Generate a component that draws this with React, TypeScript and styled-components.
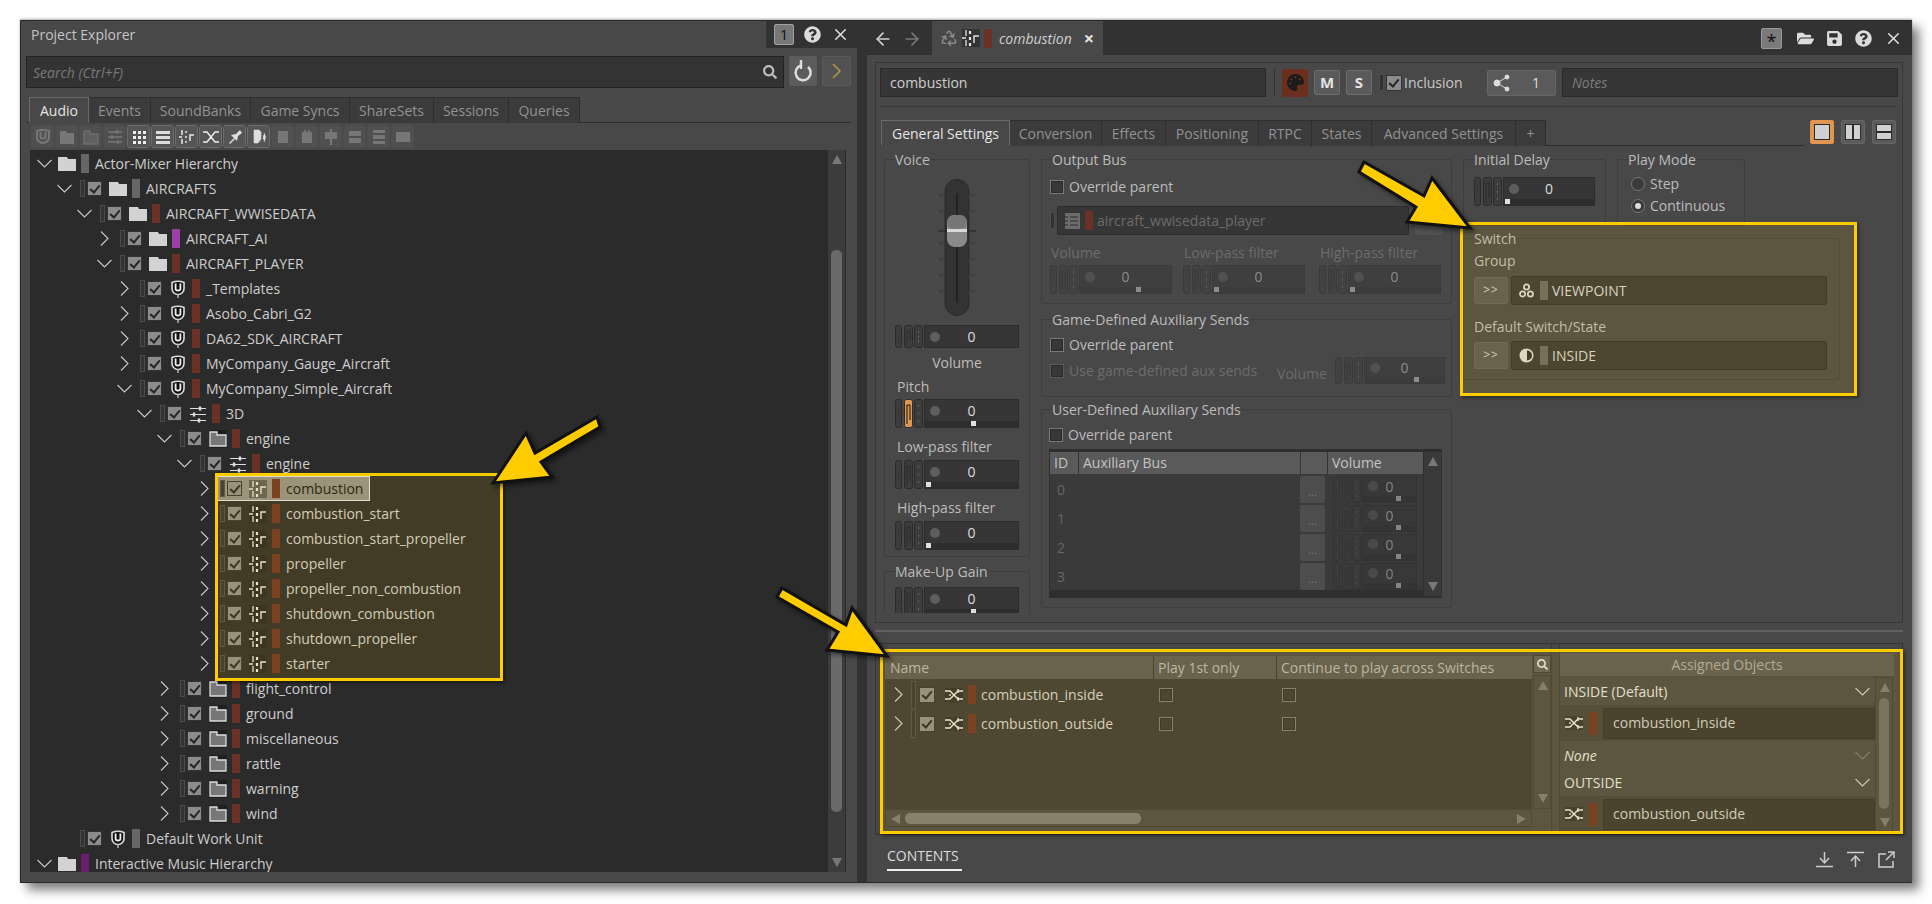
import { ReactElement, ReactNode } from 'react';
import styled, { createGlobalStyle } from 'styled-components';
import { FaFolderOpen, FaPalette, FaQuestionCircle, FaSave, FaSearch } from 'react-icons/fa';
import { ArrowLeft, ArrowRight, Recycle, X } from 'lucide-react';

const GlobalStyle = createGlobalStyle`
	html, body {
		margin: 0;
		background: #fff;
		overflow: hidden;
	}
	body {
		font-family: "Open Sans", "Noto Sans", sans-serif;
		font-size: 14px;
		color: #c8c8c8;
	}
	* {
		box-sizing: border-box;
	}
`;

/* ---- small drawings ---- */

const Svg = styled.svg`
	display: block;
	flex: none;
`;

const Chevron = ({ open, dim }: { open: boolean; dim?: boolean }): ReactElement => (
	<Svg width="15" height="15" viewBox="0 0 15 15" fill="none" stroke={dim ? '#777' : '#c8c8c8'} strokeWidth="1.1">
		{open ? <path d="M0.5 4 7.5 11 14.5 4" /> : <path d="M4 0.5 11 7.5 4 14.5" />}
	</Svg>
);

const FolderIcon = (): ReactElement => (
	<Svg width="18" height="14" viewBox="0 0 18 14" fill="#d2d2d2">
		<path d="M0 0H9L10 2H18V14H0Z" />
	</Svg>
);

const ActorFolderIcon = (): ReactElement => (
	<Svg width="18" height="18" viewBox="0 0 18 18">
		<rect width="18" height="18" fill="#1f1f1f" />
		<path d="M1 2H8V5H17V16H1Z" fill="#777" stroke="#ddd" strokeWidth="1.3" />
	</Svg>
);

const WorkUnitIcon = (): ReactElement => (
	<Svg width="14" height="18" viewBox="0 0 14 18" fill="none">
		<path d="M1 2.5Q7 0 13 2.5V8.5A6 6 0 0 1 1 8.5Z" fill="#111" stroke="#ddd" strokeWidth="1.6" />
		<path d="M4.6 3.5V9C4.6 11 9.4 11 9.4 9V3.5" stroke="#eee" strokeWidth="1.8" />
		<path d="M7 14V18" stroke="#bbb" strokeWidth="1.4" />
	</Svg>
);

const BlendIcon = (): ReactElement => (
	<Svg width="18" height="18" viewBox="0 0 18 18" stroke="#ddd" strokeWidth="1.2">
		<path d="M1 3.5H17M1 9.5H17M1 15.5H17" />
		<path d="M11 1.5V5.5M5 7.5V11.5M10 13.5V17.5" strokeWidth="2.4" />
	</Svg>
);

const SwitchIcon = (): ReactElement => (
	<Svg width="18" height="18" viewBox="0 0 18 18" fill="none">
		<rect width="18" height="18" fill="#1d1d1d" opacity="0.45" />
		<path d="M0 9H4M4 1V7M4 11V17" stroke="#e4e4e4" strokeWidth="1.3" />
		<path d="M8 2V5M8 8V11M8 14V17" stroke="#e4e4e4" strokeWidth="2.2" />
		<path d="M12 14V7H17" stroke="#e4e4e4" strokeWidth="1.4" />
	</Svg>
);

const RandomIcon = (): ReactElement => (
	<Svg width="18" height="14" viewBox="0 0 18 14" fill="none" stroke="#e8e8e8" strokeWidth="1.3">
		<rect width="18" height="14" fill="#1d1d1d" opacity="0.4" stroke="none" />
		<path d="M0 3H5L13 11H18M0 11H5L13 3H18" />
		<path d="M5 6V8M13 1V5M13 9V13" />
	</Svg>
);

const BusIcon = (): ReactElement => (
	<Svg width="18" height="18" viewBox="0 0 18 18">
		<rect x="2" y="1" width="15" height="16" fill="#6c6c6c" />
		<path d="M0 5H5M0 9H5M0 13H5M7 5H15M7 9H15M7 13H15" stroke="#2c2c2c" strokeWidth="1.2" />
	</Svg>
);

const GroupIcon = (): ReactElement => (
	<Svg width="15" height="15" viewBox="0 0 15 15" fill="none" stroke="#d4d4d4" strokeWidth="1.8">
		<circle cx="7.5" cy="4" r="2.6" />
		<circle cx="3.6" cy="11" r="2.6" />
		<circle cx="11.4" cy="11" r="2.6" />
	</Svg>
);

const StateIcon = (): ReactElement => (
	<Svg width="15" height="15" viewBox="0 0 15 15">
		<circle cx="7.5" cy="7.5" r="7" fill="#d8d8d8" />
		<path d="M8 2.5A5 5 0 0 1 8 12.5Z" fill="#2c2c2c" />
	</Svg>
);

const CheckMark = styled.span<{ $big?: boolean }>`
	display: block;
	flex: none;
	width: ${(p) => (p.$big ? 14 : 13)}px;
	height: ${(p) => (p.$big ? 14 : 13)}px;
	background: #8c8c8c;
	box-shadow: 0 0 0 1px #333;
	position: relative;
	&::after {
		content: '';
		position: absolute;
		left: 4px;
		top: 1px;
		width: 4px;
		height: 8px;
		border: solid #262626;
		border-width: 0 2px 2px 0;
		transform: rotate(40deg);
	}
`;

const EmptyCheck = styled.span<{ $disabled?: boolean }>`
	display: block;
	flex: none;
	width: 14px;
	height: 14px;
	background: #383838;
	border: 1px solid ${(p) => (p.$disabled ? '#5c5c5c' : '#7a7a7a')};
	box-shadow: inset 0 0 0 1px #2a2a2a;
`;

const DragHandle = styled.span`
	display: block;
	flex: none;
	width: 5px;
	height: 17px;
	background: #333;
	border: 1px solid #4c4c4c;
`;

const ColorBar = styled.span<{ $color: string; $height?: number }>`
	display: block;
	flex: none;
	width: 8px;
	height: ${(p) => p.$height ?? 19}px;
	background: ${(p) => p.$color};
`;

/* ---- callouts over the screenshot ---- */

const Page = styled.div`
	position: relative;
	width: 1932px;
	height: 904px;
	padding: 20px 20px 21px;
`;

const Callout = styled.div`
	position: absolute;
	border: 3px solid #ffcc00;
	background: rgba(255, 204, 0, 0.11);
	box-shadow: 2px 2px 3px rgba(0, 0, 0, 0.4);
	pointer-events: none;
`;

const TreeCallout = styled(Callout)`
	left: 215px;
	top: 473px;
	width: 288px;
	height: 208px;
`;

const SwitchCallout = styled(Callout)`
	left: 1460px;
	top: 222px;
	width: 397px;
	height: 174px;
`;

const ContentsCallout = styled(Callout)`
	left: 880px;
	top: 649px;
	width: 1023px;
	height: 185px;
`;

const Arrows = styled.svg`
	position: absolute;
	left: 0;
	top: 0;
	filter: drop-shadow(3px 3px 2px rgba(0, 0, 0, 0.45));
	pointer-events: none;
`;

/* ---- window ---- */

const Window = styled.div`
	display: flex;
	width: 1892px;
	height: 863px;
	box-shadow: 0 -1px 2px rgba(0, 0, 0, 0.3), 7px 7px 10px rgba(0, 0, 0, 0.5);
	border: 1px solid #2a2a2a;
	border-width: 1px 0 1px 1px;
`;

const ExplorerPanel = styled.section`
	width: 836px;
	background: #484848;
	display: flex;
	flex-direction: column;
`;

const ExplorerTitleBar = styled.header`
	height: 27px;
	display: flex;
	align-items: center;
	justify-content: space-between;
	padding-left: 10px;
	color: #c4c4c4;
`;

const TitleTools = styled.div`
	width: 91px;
	height: 27px;
	background: #323232;
	display: flex;
	align-items: center;
	gap: 10px;
	padding-left: 8px;
	color: #dcdcdc;
`;

const CountBadge = styled.span`
	width: 20px;
	height: 21px;
	border-radius: 2px;
	background: #777;
	border: 1px solid #a0a0a0;
	color: #111;
	font-size: 15px;
	line-height: 18px;
	text-align: center;
`;

const SearchRow = styled.div`
	display: flex;
	margin: 8px 0 0 5px;
	gap: 5px;
`;

const SearchField = styled.div`
	width: 758px;
	height: 32px;
	background: #333;
	border: 1px solid #222;
	display: flex;
	align-items: center;
	justify-content: space-between;
	padding: 0 6px;
	font-style: italic;
	color: #7a7a7a;
`;

const SquareButton = styled.button<{ $width: number; $active?: boolean }>`
	width: ${(p) => p.$width}px;
	height: 30px;
	padding: 0;
	background: ${(p) => (p.$active ? '#5c5c5c' : '#525252')};
	border: 1px solid #595959;
	border-radius: 2px;
	display: flex;
	align-items: center;
	justify-content: center;
	font: inherit;
	color: #c0a24c;
`;

const TabStrip = styled.nav<{ $left: number }>`
	display: flex;
	height: 26px;
	padding-left: ${(p) => p.$left}px;
	border-bottom: 1px solid #2d2d2d;
`;

const ExplorerTabs = styled(TabStrip)`
	margin: 9px 6px 0 5px;
`;

const Tab = styled.div<{ $width: number; $active?: boolean }>`
	width: ${(p) => p.$width}px;
	height: 26px;
	flex: none;
	text-align: center;
	line-height: 25px;
	background: ${(p) => (p.$active ? '#484848' : '#3b3b3b')};
	color: ${(p) => (p.$active ? '#e4e4e4' : '#929292')};
	border-right: 1px solid #2e2e2e;
	border-top: 1px solid #2e2e2e;
	${(p) => p.$active && 'border: 1px solid #6a6a6a; border-bottom: 1px solid #484848;'}
`;

const ToolRow = styled.div`
	display: flex;
	gap: 1px;
	margin: 2px 0 0 10px;
`;

const ToolButton = styled.span<{ $on: boolean }>`
	width: 23px;
	height: 23px;
	border-radius: 3px;
	background: ${(p) => (p.$on ? '#555' : '#505050')};
	border: 1px solid ${(p) => (p.$on ? '#6c6c6c' : '#4e4e4e')};
	display: flex;
	align-items: center;
	justify-content: center;
	& > svg {
		opacity: ${(p) => (p.$on ? 1 : 0.28)};
	}
`;

const TreeArea = styled.div`
	position: relative;
	margin: 2px 0 0 9px;
	width: 816px;
	height: 722px;
	background: #2b2b2b;
	padding-top: 1px;
	overflow: hidden;
`;

const TreeRow = styled.div<{ $depth: number }>`
	height: 25px;
	display: flex;
	align-items: center;
	padding-left: ${(p) => 6.5 + 20 * p.$depth}px;
	color: #cdcdcd;
	white-space: nowrap;
`;

const ChevronSlot = styled.span`
	width: 15px;
	flex: none;
`;

const RowBody = styled.div<{ $selected?: boolean; $root?: boolean }>`
	display: flex;
	align-items: center;
	height: 25px;
	margin-left: ${(p) => (p.$root ? -5 : 4)}px;
	padding: 0 6px 0 3px;
	border: 1px solid ${(p) => (p.$selected ? '#e0e0e0' : 'transparent')};
	background: ${(p) => (p.$selected ? '#908e8a' : 'transparent')};
	color: ${(p) => (p.$selected ? '#111' : 'inherit')};
`;

const RowCheck = styled(CheckMark)`
	margin-left: 3px;
`;

const RowIcon = styled.span<{ $root?: boolean }>`
	width: 18px;
	flex: none;
	margin: 0 5px 0 ${(p) => (p.$root ? 7.5 : 8.5)}px;
	display: flex;
	justify-content: center;
`;

const RowLabel = styled.span`
	margin-left: 6px;
`;

const ScrollTrack = styled.div`
	position: absolute;
	right: 1px;
	top: 0;
	bottom: 0;
	width: 17px;
	background: #3c3c3c;
`;

const ScrollThumb = styled.div<{ $top: number; $height: number }>`
	position: absolute;
	left: 3px;
	right: 3px;
	top: ${(p) => p.$top}px;
	height: ${(p) => p.$height}px;
	border-radius: 5px;
	background: #6a6a6a;
`;

const ScrollArrow = styled.span<{ $dir: 'up' | 'down' | 'left' | 'right' }>`
	position: absolute;
	width: 0;
	height: 0;
	border: 5px solid transparent;
	${(p) =>
		p.$dir === 'up'
			? 'border-bottom: 9px solid #787878; border-top: 0; top: 5px; left: 4px;'
			: p.$dir === 'down'
				? 'border-top: 9px solid #787878; border-bottom: 0; bottom: 5px; left: 4px;'
				: p.$dir === 'left'
					? 'border-right: 9px solid #787878; border-left: 0; left: 5px; top: 4px;'
					: 'border-left: 9px solid #787878; border-right: 0; right: 5px; top: 4px;'}
`;

/* ---- property editor ---- */

const EditorPanel = styled.section`
	flex: 1;
	background: #323232;
	display: flex;
	flex-direction: column;
	min-width: 0;
`;

const EditorHeader = styled.header`
	height: 34px;
	display: flex;
	align-items: flex-end;
	padding-left: 16px;
	flex: none;
`;

const NavArrows = styled.div`
	display: flex;
	gap: 9px;
	width: 59px;
	height: 33px;
	align-items: center;
	color: #d0d0d0;
	& > svg:last-child {
		color: #777;
	}
`;

const DocTab = styled.div`
	width: 171px;
	height: 34px;
	background: #484848;
	display: flex;
	align-items: center;
	padding-left: 8px;
	font-style: italic;
	gap: 4px;
	color: #cfcfcf;
`;

const DocTitle = styled.span`
	margin-left: 3px;
`;

const TabClose = styled.span`
	margin-left: 8px;
	font-style: normal;
	font-weight: 700;
	font-size: 18px;
	line-height: 18px;
	color: #e4e4e4;
`;

const HeaderTools = styled.div`
	margin-left: auto;
	height: 34px;
	display: flex;
	align-items: center;
	gap: 12px;
	padding-right: 9px;
	color: #dcdcdc;
`;

const StarButton = styled.span`
	width: 21px;
	height: 21px;
	margin-right: 3px;
	background: #7a7a7a;
	border: 1px solid #999;
	border-radius: 2px;
	color: #111;
	font-size: 18px;
	line-height: 24px;
	text-align: center;
`;

const EditorBody = styled.div`
	flex: 1;
	margin-left: 10px;
	background: #484848;
	padding: 7px 9px 0 8px;
	display: flex;
	flex-direction: column;
	min-height: 0;
`;

const SettingsFrame = styled.div`
	height: 561px;
	flex: none;
	border: 1px solid #383838;
	overflow: hidden;
	padding: 5px 4px 0;
`;

const NameRow = styled.div`
	display: flex;
	align-items: center;
	height: 29px;
`;

const TextField = styled.div<{ $width: number; $muted?: boolean }>`
	width: ${(p) => p.$width}px;
	height: 29px;
	flex: none;
	background: #363636;
	border: 1px solid #2a2a2a;
	display: flex;
	align-items: center;
	padding-left: 9px;
	color: ${(p) => (p.$muted ? '#7c7c7c' : '#cfcfcf')};
	font-style: ${(p) => (p.$muted ? 'italic' : 'normal')};
`;

const ThinRule = styled.span`
	width: 1px;
	height: 27px;
	background: #333;
	margin: 0 7px 0 8px;
	flex: none;
`;

const ColorSwatch = styled.span`
	width: 26px;
	height: 28px;
	background: #6c2f1e;
	color: #1c1c1c;
	display: flex;
	align-items: center;
	justify-content: center;
	flex: none;
	border-radius: 2px;
`;

const LetterButton = styled.span`
	width: 26px;
	height: 25px;
	flex: none;
	margin-left: 6px;
	background: #5a5a5a;
	border: 1px solid #6c6c6c;
	border-radius: 2px;
	color: #e4e4e4;
	font-weight: 700;
	font-size: 15px;
	line-height: 22px;
	text-align: center;
`;

const InclusionBlock = styled.div`
	display: flex;
	align-items: center;
	margin-left: 7px;
	width: 108px;
	gap: 3px;
	flex: none;
`;

const ShareButton = styled.span`
	width: 69px;
	height: 26px;
	flex: none;
	background: #5a5a5a;
	border: 1px solid #666;
	border-radius: 2px;
	display: flex;
	align-items: center;
	justify-content: space-between;
	padding: 0 15px 0 5px;
	color: #ddd;
`;

const NotesField = styled(TextField)`
	margin-left: 6px;
`;

const HRule = styled.hr`
	border: 0;
	height: 1px;
	background: #3a3a3a;
	margin: 9px 2px 0 0;
`;

const SettingsTabRow = styled.div`
	display: flex;
	align-items: flex-end;
	margin-top: 13px;
`;

const SettingsTabs = styled(TabStrip)`
	width: 924px;
`;

const ViewButtons = styled.div`
	display: flex;
	gap: 7px;
	margin: 0 0 2px 6px;
`;

const ViewButton = styled.span<{ $on?: boolean; $kind: 'one' | 'cols' | 'rows' }>`
	width: 24px;
	height: 24px;
	padding: 4px;
	border-radius: 2px;
	background: ${(p) => (p.$on ? '#e0964f' : '#5a5a5a')};
	border: 1px solid ${(p) => (p.$on ? '#e0964f' : '#666')};
	display: grid;
	gap: 2px;
	grid-template-columns: ${(p) => (p.$kind === 'cols' ? '1fr 1fr' : '1fr')};
	grid-template-rows: ${(p) => (p.$kind === 'rows' ? '1fr 1fr' : '1fr')};
	& > i {
		display: block;
		background: #d0d0d0;
		box-shadow: 0 0 0 1px #2b2b2b;
	}
`;

const SettingsGrid = styled.div`
	display: flex;
	gap: 11px;
	padding: 4px 0 0 4px;
	height: 467px;
	overflow: hidden;
`;

const Column = styled.div<{ $width: number }>`
	width: ${(p) => p.$width}px;
	flex: none;
`;

const Group = styled.fieldset<{ $height: number; $pad?: number; $top?: number; $width?: number }>`
	margin: ${(p) => p.$top ?? 0}px 0 0;
	padding: 0 ${(p) => p.$pad ?? 10}px;
	height: ${(p) => p.$height}px;
	min-width: 0;
	width: ${(p) => (p.$width ? `${p.$width}px` : 'auto')};
	flex: none;
	border: 1px solid #3e3e3e;
	border-radius: 2px;
	& > legend {
		margin-left: ${(p) => 10 - (p.$pad ?? 10)}px;
		padding: 0;
		line-height: 19px;
		color: #bcbcbc;
	}
`;

const FieldLabel = styled.div<{ $top?: number; $center?: boolean; $dim?: boolean; $inset?: number }>`
	line-height: 19px;
	height: 19px;
	margin-top: ${(p) => p.$top ?? 0}px;
	padding-left: ${(p) => p.$inset ?? 0}px;
	text-align: ${(p) => (p.$center ? 'center' : 'left')};
	color: ${(p) => (p.$dim ? '#6c6c6c' : '#bcbcbc')};
	white-space: nowrap;
`;

const CheckRow = styled.label<{ $top?: number; $dim?: boolean }>`
	display: flex;
	align-items: center;
	gap: 5px;
	height: 19px;
	margin-top: ${(p) => p.$top ?? 0}px;
	color: ${(p) => (p.$dim ? '#6c6c6c' : '#bcbcbc')};
	white-space: nowrap;
`;

const Fader = styled.svg`
	display: block;
	margin: 10px auto 0;
`;

const ValueWrap = styled.div<{ $top?: number; $dim?: boolean }>`
	display: flex;
	gap: 1px;
	margin-top: ${(p) => p.$top ?? 0}px;
	opacity: ${(p) => (p.$dim ? 0.45 : 1)};
`;

const ValueBox = styled.div`
	flex: 1;
	background: #363636;
	border: 1px solid #2c2c2c;
	display: flex;
	flex-direction: column;
	min-width: 0;
`;

const ValueTop = styled.div`
	flex: 1;
	position: relative;
	display: flex;
	align-items: center;
	justify-content: center;
	color: #ddd;
	&::before {
		content: '';
		position: absolute;
		left: 5px;
		top: 50%;
		margin-top: -5px;
		width: 10px;
		height: 10px;
		border-radius: 50%;
		background: #5e5e5e;
	}
`;

const ValueBar = styled.div<{ $pos: number }>`
	height: 6px;
	background: #2e2e2e;
	padding-left: ${(p) => p.$pos}%;
	&::after {
		content: '';
		display: block;
		width: 5px;
		height: 5px;
		background: #e0e0e0;
	}
`;

type ValueProps = {
	height?: number;
	pos?: number;
	top?: number;
	dim?: boolean;
	active?: boolean;
};

const ValueField = ({ height = 29, pos, top, dim, active }: ValueProps): ReactElement => (
	<ValueWrap $top={top} $dim={dim}>
		<Svg width="28" height={height} viewBox={`0 0 28 ${height}`} fill="#3c3c3c" stroke="#2b2b2b">
			<rect x="0.5" y="0.5" width="6" height={height - 1} rx="2" />
			<path d={`M3.5 ${height / 2 - 1}V${height / 2 + 1}`} />
			<rect x="9.5" y="0.5" width="8" height={height - 1} rx="2" fill={active ? '#e0964f' : '#3c3c3c'} />
			<path d={`M12 ${height - 4}V6H15V${height - 8}`} fill="none" stroke={active ? '#111' : '#2b2b2b'} />
			<rect x="19.5" y="0.5" width="8" height={height - 1} rx="2" />
			<path d={`M23.5 6V8M23.5 ${height / 2 - 1}V${height / 2 + 1}M23.5 ${height - 8}V${height - 6}`} stroke="#666" />
		</Svg>
		<ValueBox>
			<ValueTop>0</ValueTop>
			{pos !== undefined && <ValueBar $pos={pos} />}
		</ValueBox>
	</ValueWrap>
);

const BusRow = styled.div`
	display: flex;
	align-items: center;
	margin-top: 10px;
	gap: 2px;
`;

const RefField = styled.div<{ $dim?: boolean; $width: number }>`
	width: ${(p) => p.$width}px;
	height: 29px;
	flex: none;
	background: #363636;
	border: 1px solid #2c2c2c;
	border-radius: 2px;
	display: flex;
	align-items: center;
	padding-left: 5px;
	gap: 4px;
	color: ${(p) => (p.$dim ? '#6c6c6c' : '#d4d4d4')};
`;

const MiniButton = styled.span`
	width: 28px;
	height: 20px;
	margin: 9px 0 0 4px;
	flex: none;
	background: #505050;
	border-radius: 2px;
`;

const ThreeCols = styled.div`
	display: flex;
	gap: 11px;
	margin-top: 8px;
	& > div {
		width: 122px;
		flex: none;
	}
	& > div:last-child {
		margin-left: 3px;
	}
`;

const UseGameRow = styled.div`
	display: flex;
	align-items: center;
	margin-top: 3px;
	height: 27px;
`;

const UseGameVolume = styled.div`
	margin-left: 20px;
	padding-top: 6px;
	width: 58px;
	color: #6c6c6c;
	flex: none;
`;

const AuxTable = styled.div`
	position: relative;
	margin: 5px 2px 0 0;
	width: 393px;
	height: 149px;
	background: #2f2f2f;
	padding: 3px 19px 0 1px;
`;

const AuxHead = styled.div`
	height: 22px;
	background: #5a5a5a;
	display: grid;
	grid-template-columns: 28px 222px 27px 1fr;
	line-height: 21px;
	color: #c4c4c4;
	& > span {
		padding-left: 4px;
		border-left: 1px solid #333;
	}
	& > span:first-child {
		border: 0;
	}
`;

const AuxRow = styled.div`
	height: 29px;
	background: #3a3a3a;
	display: grid;
	grid-template-columns: 28px 222px 27px 1fr;
	align-items: center;
	color: #666;
	padding-top: 1px;
`;

const AuxId = styled.span`
	padding-left: 7px;
`;

const AuxDots = styled.span`
	width: 25px;
	height: 27px;
	background: #4d4d4d;
	border-radius: 2px;
	text-align: center;
	line-height: 32px;
	font-size: 11px;
	color: #777;
`;

const AuxScroll = styled.div`
	position: absolute;
	right: 1px;
	top: 3px;
	bottom: 2px;
	width: 17px;
	background: #3a3a3a;
`;

const TinyValue = styled.div`
	padding: 0 6px;
`;

const RadioRow = styled.label<{ $top: number }>`
	display: flex;
	align-items: center;
	gap: 5px;
	margin: ${(p) => p.$top}px 0 0 3px;
	height: 19px;
	color: #bcbcbc;
`;

const Radio = styled.span<{ $on?: boolean }>`
	width: 14px;
	height: 14px;
	border-radius: 50%;
	background: #3a3a3a;
	border: 1px solid #777;
	display: flex;
	align-items: center;
	justify-content: center;
	&::after {
		content: '';
		width: 6px;
		height: 6px;
		border-radius: 50%;
		background: ${(p) => (p.$on ? '#ddd' : 'transparent')};
	}
`;

const PickRow = styled.div<{ $top: number }>`
	display: flex;
	align-items: center;
	gap: 3px;
	margin-top: ${(p) => p.$top}px;
`;

const PickButton = styled.span`
	width: 34px;
	height: 27px;
	flex: none;
	background: #575757;
	border: 1px solid #606060;
	border-radius: 2px;
	text-align: center;
	line-height: 24px;
	font-size: 12px;
	letter-spacing: 1px;
	color: #d0d0d0;
`;

const SplitterGap = styled.div`
	height: 20px;
	flex: none;
	display: flex;
	align-items: center;
	&::after {
		content: '';
		flex: 1;
		height: 2px;
		margin-top: -4px;
		background: #606060;
	}
`;

const ContentsFrame = styled.div`
	height: 192px;
	flex: none;
	border: 1px solid #333;
	display: flex;
	padding-left: 9px;
`;

const AssignTable = styled.div`
	width: 666px;
	flex: none;
	margin-top: 12px;
	display: grid;
	grid-template-columns: 647px 19px;
	grid-template-rows: 23px 130px 18px;
`;

const AssignHead = styled.div`
	background: #575757;
	display: grid;
	grid-template-columns: 268px 123px 1fr;
	line-height: 23px;
	color: #b4b4b4;
	& > span {
		padding-left: 4px;
		border-left: 1px solid #333;
		white-space: nowrap;
	}
	& > span:first-child {
		border: 0;
		padding-left: 5px;
	}
`;

const SearchCorner = styled.span`
	width: 16px;
	height: 16px;
	margin-left: 2px;
	background: #5c5c5c;
	box-shadow: 0 0 0 1px #3a3a3a;
	display: flex;
	align-items: center;
	justify-content: center;
	color: #ddd;
`;

const AssignBody = styled.div`
	background: #393939;
	padding-top: 1px;
`;

const AssignRow = styled.div`
	height: 29px;
	display: grid;
	grid-template-columns: 268px 123px 1fr;
	align-items: center;
`;

const AssignName = styled.div`
	display: flex;
	align-items: center;
	padding-left: 6px;
	color: #d0d0d0;
`;

const AssignHandle = styled(DragHandle)`
	margin-left: 5px;
	height: 28px;
`;

const AssignCheck = styled(CheckMark)`
	margin-left: 4px;
`;

const AssignIcon = styled.span`
	margin: 0 5px 0 11px;
`;

const AssignText = styled.span`
	margin-left: 5px;
`;

const CellCheck = styled.span`
	padding-left: 6px;
`;

const VScroll = styled.div`
	position: relative;
	background: #484848;
	border: 1px solid #3c3c3c;
	margin-left: 1px;
	margin-top: -4px;
	height: 134px;
`;

const HScroll = styled.div`
	position: relative;
	background: #484848;
	border: 1px solid #3c3c3c;
`;

const HThumb = styled.div`
	position: absolute;
	left: 19px;
	top: 3px;
	width: 236px;
	height: 11px;
	border-radius: 5px;
	background: #797979;
`;

const PaneSplit = styled.div`
	width: 9px;
	flex: none;
	border-left: 1px solid #3c3c3c;
	border-right: 1px solid #3c3c3c;
`;

const ObjectsTable = styled.div`
	width: 334px;
	flex: none;
	margin-top: 9px;
	position: relative;
`;

const ObjectsHead = styled.div`
	height: 24px;
	background: #575757;
	text-align: center;
	line-height: 24px;
	color: #a8a8a8;
	border-bottom: 1px solid #444;
`;

const ObjectsList = styled.div`
	width: 315px;
`;

const ObjectState = styled.div<{ $height: number; $italic?: boolean }>`
	height: ${(p) => p.$height}px;
	display: flex;
	align-items: center;
	justify-content: space-between;
	padding: 0 5px 0 4px;
	color: #e0e0e0;
	font-style: ${(p) => (p.$italic ? 'italic' : 'normal')};
`;

const ObjectItem = styled.div`
	height: 36px;
	display: flex;
	align-items: center;
	background: #404040;
	padding-left: 5px;
	gap: 6px;
`;

const ObjectField = styled.div`
	flex: 1;
	height: 31px;
	background: #343434;
	border: 1px solid #2e2e2e;
	line-height: 28px;
	padding-left: 9px;
	color: #ccc;
`;

const ObjectsScroll = styled.div`
	position: absolute;
	left: 315px;
	top: 24px;
	bottom: 1px;
	width: 18px;
	background: #484848;
	border: 1px solid #3c3c3c;
`;

const EditorFooter = styled.footer`
	flex: 1;
	display: flex;
	align-items: flex-start;
	justify-content: space-between;
	padding: 10px 8px 0 12px;
`;

const ContentsTab = styled.span`
	display: block;
	width: 75px;
	height: 26px;
	border-bottom: 2px solid #eee;
	color: #dcdcdc;
	line-height: 21px;
`;

const FooterTools = styled.div`
	display: flex;
	gap: 14px;
	margin-top: 6px;
`;

const TopGroups = styled.div`
	display: flex;
	gap: 11px;
`;

const PickIcon = styled.span`
	margin: 0 2px;
`;

const WideValueSlot = styled.div`
	width: 110px;
	flex: none;
`;

/* ---- data ---- */

const BROWN = '#6a3226';
const GREY = '#666';

type TreeKind = 'folder' | 'actor' | 'unit' | 'blend' | 'switch';

type TreeItem = {
	label: string;
	depth: number;
	kind: TreeKind;
	color: string;
	open?: boolean;
	leaf?: boolean;
	selected?: boolean;
};

const treeItems: TreeItem[] = [
	{ label: 'Actor-Mixer Hierarchy', depth: 0, kind: 'folder', color: GREY, open: true },
	{ label: 'AIRCRAFTS', depth: 1, kind: 'folder', color: GREY, open: true },
	{ label: 'AIRCRAFT_WWISEDATA', depth: 2, kind: 'folder', color: BROWN, open: true },
	{ label: 'AIRCRAFT_AI', depth: 3, kind: 'folder', color: '#9a3fa5' },
	{ label: 'AIRCRAFT_PLAYER', depth: 3, kind: 'folder', color: BROWN, open: true },
	{ label: '_Templates', depth: 4, kind: 'unit', color: BROWN },
	{ label: 'Asobo_Cabri_G2', depth: 4, kind: 'unit', color: BROWN },
	{ label: 'DA62_SDK_AIRCRAFT', depth: 4, kind: 'unit', color: BROWN },
	{ label: 'MyCompany_Gauge_Aircraft', depth: 4, kind: 'unit', color: BROWN },
	{ label: 'MyCompany_Simple_Aircraft', depth: 4, kind: 'unit', color: BROWN, open: true },
	{ label: '3D', depth: 5, kind: 'blend', color: BROWN, open: true },
	{ label: 'engine', depth: 6, kind: 'actor', color: BROWN, open: true },
	{ label: 'engine', depth: 7, kind: 'blend', color: BROWN, open: true },
	{ label: 'combustion', depth: 8, kind: 'switch', color: BROWN, selected: true },
	{ label: 'combustion_start', depth: 8, kind: 'switch', color: BROWN },
	{ label: 'combustion_start_propeller', depth: 8, kind: 'switch', color: BROWN },
	{ label: 'propeller', depth: 8, kind: 'switch', color: BROWN },
	{ label: 'propeller_non_combustion', depth: 8, kind: 'switch', color: BROWN },
	{ label: 'shutdown_combustion', depth: 8, kind: 'switch', color: BROWN },
	{ label: 'shutdown_propeller', depth: 8, kind: 'switch', color: BROWN },
	{ label: 'starter', depth: 8, kind: 'switch', color: BROWN },
	{ label: 'flight_control', depth: 6, kind: 'actor', color: BROWN },
	{ label: 'ground', depth: 6, kind: 'actor', color: BROWN },
	{ label: 'miscellaneous', depth: 6, kind: 'actor', color: BROWN },
	{ label: 'rattle', depth: 6, kind: 'actor', color: BROWN },
	{ label: 'warning', depth: 6, kind: 'actor', color: BROWN },
	{ label: 'wind', depth: 6, kind: 'actor', color: BROWN },
	{ label: 'Default Work Unit', depth: 1, kind: 'unit', color: GREY, leaf: true },
	{ label: 'Interactive Music Hierarchy', depth: 0, kind: 'folder', color: '#6a1f72', open: true },
];

const kindIcons: Record<TreeKind, ReactNode> = {
	folder: <FolderIcon />,
	actor: <ActorFolderIcon />,
	unit: <WorkUnitIcon />,
	blend: <BlendIcon />,
	switch: <SwitchIcon />,
};

const explorerTabs: [string, number][] = [
	['Audio', 60],
	['Events', 62],
	['SoundBanks', 100],
	['Game Syncs', 99],
	['ShareSets', 84],
	['Sessions', 75],
	['Queries', 71],
];

const settingsTabs: [string, number][] = [
	['General Settings', 129],
	['Conversion', 92],
	['Effects', 64],
	['Positioning', 93],
	['RTPC', 53],
	['States', 60],
	['Advanced Settings', 144],
	['+', 30],
];

const toolDrawings: ReactNode[] = [
	<path key="a" d="M2 2Q8 0 14 2V8A6 6 0 0 1 2 8Z M5.5 3V8C5.5 10 10.5 10 10.5 8V3" fill="none" stroke="#ddd" strokeWidth="2" />,
	<path key="b" d="M1 2H7L8 4H15V15H1Z" fill="#ddd" />,
	<path key="c" d="M1 2H7V5H15V15H1Z" fill="#888" stroke="#ddd" />,
	<path key="d" d="M1 3H15M1 8H15M1 13H15M10 1V5M5 6V10M11 11V15" stroke="#ddd" strokeWidth="1.4" />,
	<path key="e" d="M2 2h3v3H2zM7 2h3v3H7zM12 2h3v3h-3zM2 7h3v3H2zM7 7h3v3H7zM12 7h3v3h-3zM2 12h3v3H2zM7 12h3v3H7zM12 12h3v3h-3z" fill="#eee" />,
	<path key="f" d="M1 2h14v3H1zM1 7h14v3H1zM1 12h14v3H1z" fill="#ddd" />,
	<path key="g" d="M0 8H3M3 1V6M3 10V15M7 2V4M7 7V9M7 12V14M11 12V6H15" fill="none" stroke="#eee" strokeWidth="1.4" />,
	<path key="h" d="M0 3H4L12 13H16M0 13H4L12 3H16" fill="none" stroke="#eee" strokeWidth="1.4" />,
	<path key="i" d="M2 14 7 9 4 6 9 5 13 1 15 4 11 7 10 12 8 10 3 15Z" fill="#ddd" />,
	<path key="j" d="M3 1H8L10 3V10L7 14H3ZM12 6Q14 8 12 11M13 4Q16 8 13 13" fill="#ddd" stroke="#ddd" strokeWidth="0.6" />,
	<rect key="k" x="3" y="2" width="10" height="12" fill="#ddd" />,
	<path key="l" d="M3 3H5V1H7V3H9V1H11V3H13V14H3Z" fill="#ddd" />,
	<path key="m" d="M7 0H9V3H14V10H9V16H7V10H2V3H7Z" fill="#ddd" />,
	<path key="n" d="M2 2H14V7H2ZM2 9H14V14H2Z" fill="#ddd" />,
	<path key="o" d="M2 1H14V4H2ZM2 6H14V10H2ZM2 12H14V15H2Z" fill="#ddd" />,
	<path key="p" d="M1 3H15V13H1Z" fill="#ddd" />,
];

const Tree = (): ReactElement => (
	<TreeArea>
		{treeItems.map((item, index) => (
			<TreeRow key={`${item.label}-${index}`} $depth={item.depth}>
				<ChevronSlot>{!item.leaf && <Chevron open={!!item.open} />}</ChevronSlot>
				<RowBody $selected={item.selected} $root={item.depth === 0}>
					{item.depth > 0 && (
						<>
							<DragHandle />
							<RowCheck />
						</>
					)}
					<RowIcon $root={item.depth === 0}>{kindIcons[item.kind]}</RowIcon>
					<ColorBar $color={item.color} />
					<RowLabel>{item.label}</RowLabel>
				</RowBody>
			</TreeRow>
		))}
		<ScrollTrack>
			<ScrollArrow $dir="up" />
			<ScrollThumb $top={100} $height={562} />
			<ScrollArrow $dir="down" />
		</ScrollTrack>
	</TreeArea>
);

const Explorer = (): ReactElement => (
	<ExplorerPanel>
		<ExplorerTitleBar>
			Project Explorer
			<TitleTools>
				<CountBadge>1</CountBadge>
				<FaQuestionCircle size={17} />
				<X size={19} />
			</TitleTools>
		</ExplorerTitleBar>
		<SearchRow>
			<SearchField>
				Search (Ctrl+F)
				<FaSearch size={14} color="#bbb" />
			</SearchField>
			<SquareButton $width={28} $active>
				<Svg width="20" height="24" viewBox="0 0 20 24" fill="none" stroke="#ddd" strokeWidth="2.4">
					<path d="M8 6.5A7.5 7.5 0 1 0 15 8" />
					<path d="M8 1V10" />
				</Svg>
			</SquareButton>
			<SquareButton $width={29}>
				<Svg width="9" height="16" viewBox="0 0 9 16" fill="none" stroke="#b59a45" strokeWidth="1.5">
					<path d="M1 1 8 8 1 15" />
				</Svg>
			</SquareButton>
		</SearchRow>
		<ExplorerTabs $left={3}>
			{explorerTabs.map(([label, width], i) => (
				<Tab key={label} $width={width} $active={i === 0}>
					{label}
				</Tab>
			))}
		</ExplorerTabs>
		<ToolRow>
			{toolDrawings.map((drawing, i) => (
				<ToolButton key={i} $on={i >= 4 && i <= 9}>
					<svg width="16" height="16" viewBox="0 0 16 16">
						{drawing}
					</svg>
				</ToolButton>
			))}
		</ToolRow>
		<Tree />
	</ExplorerPanel>
);

const VoiceFader = (): ReactElement => (
	<Fader width="44" height="137" viewBox="0 0 44 137">
		<path d="M4 16H8M36 16H40M4 32H8M36 32H40M4 64H8M36 64H40M4 80H8M36 80H40M4 96H8M36 96H40M4 112H8M36 112H40" stroke="#333" />
		<rect x="10" y="0.5" width="24" height="136" rx="12" fill="#333" stroke="#2a2a2a" />
		<path d="M22 14V124" stroke="#222" strokeWidth="2" />
		<rect x="12" y="36" width="20" height="32" rx="8" fill="#8a8a8a" />
		<rect x="12" y="36" width="20" height="14" rx="7" fill="#777" />
		<path d="M3 52H41" stroke="#222" />
		<rect x="12" y="50" width="20" height="3" fill="#d8d8d8" />
	</Fader>
);

const WideValue = (): ReactElement => (
	<WideValueSlot>
		<ValueField height={27} pos={62} dim />
	</WideValueSlot>
);

const Settings = (): ReactElement => (
	<SettingsGrid>
		<Column $width={146}>
			<Group $height={407}>
				<legend>Voice</legend>
				<VoiceFader />
				<ValueField height={23} top={9} />
				<FieldLabel $top={5} $center>
					Volume
				</FieldLabel>
				<FieldLabel $top={5} $inset={2}>
					Pitch
				</FieldLabel>
				<ValueField pos={49} top={3} active />
				<FieldLabel $top={9} $inset={2}>
					Low-pass filter
				</FieldLabel>
				<ValueField pos={1} top={4} />
				<FieldLabel $top={9} $inset={2}>
					High-pass filter
				</FieldLabel>
				<ValueField pos={1} top={4} />
			</Group>
			<Group $height={100} $top={5}>
				<legend>Make-Up Gain</legend>
				<ValueField pos={49} top={6} />
			</Group>
		</Column>
		<Column $width={411}>
			<Group $height={154} $pad={8}>
				<legend>Output Bus</legend>
				<CheckRow $top={8}>
					<EmptyCheck />
					Override parent
				</CheckRow>
				<BusRow>
					<DragHandle />
					<RefField $dim $width={352}>
						<BusIcon />
						<ColorBar $color={BROWN} />
						<span>aircraft_wwisedata_player</span>
					</RefField>
					<MiniButton />
				</BusRow>
				<ThreeCols>
					<div>
						<FieldLabel $dim $inset={1}>
							Volume
						</FieldLabel>
						<ValueField pos={62} top={3} dim />
					</div>
					<div>
						<FieldLabel $dim $inset={1}>
							Low-pass filter
						</FieldLabel>
						<ValueField pos={1} top={3} dim />
					</div>
					<div>
						<FieldLabel $dim $inset={1}>
							High-pass filter
						</FieldLabel>
						<ValueField pos={1} top={3} dim />
					</div>
				</ThreeCols>
			</Group>
			<Group $height={87} $pad={8} $top={6}>
				<legend>Game-Defined Auxiliary Sends</legend>
				<CheckRow $top={6}>
					<EmptyCheck />
					Override parent
				</CheckRow>
				<UseGameRow>
					<CheckRow $dim>
						<EmptyCheck $disabled />
						Use game-defined aux sends
					</CheckRow>
					<UseGameVolume>Volume</UseGameVolume>
					<WideValue />
				</UseGameRow>
			</Group>
			<Group $height={208} $pad={7} $top={3}>
				<legend>User-Defined Auxiliary Sends</legend>
				<CheckRow $top={6}>
					<EmptyCheck />
					Override parent
				</CheckRow>
				<AuxTable>
					<AuxHead>
						<span>ID</span>
						<span>Auxiliary Bus</span>
						<span />
						<span>Volume</span>
					</AuxHead>
					{[0, 1, 2, 3].map((id) => (
						<AuxRow key={id}>
							<AuxId>{id}</AuxId>
							<span />
							<AuxDots>...</AuxDots>
							<TinyValue>
								<ValueField height={27} pos={62} dim />
							</TinyValue>
						</AuxRow>
					))}
					<AuxScroll>
						<ScrollArrow $dir="up" />
						<ScrollArrow $dir="down" />
					</AuxScroll>
				</AuxTable>
			</Group>
		</Column>
		<Column $width={394}>
			<TopGroups>
				<Group $height={76} $width={143}>
					<legend>Initial Delay</legend>
					<ValueField pos={1} top={8} />
				</Group>
				<Group $height={76} $width={128}>
					<legend>Play Mode</legend>
					<RadioRow $top={5}>
						<Radio />
						Step
					</RadioRow>
					<RadioRow $top={3}>
						<Radio $on />
						Continuous
					</RadioRow>
				</Group>
			</TopGroups>
			<Group $height={151} $top={3} $width={377}>
				<legend>Switch</legend>
				<FieldLabel $top={3}>Group</FieldLabel>
				<PickRow $top={6}>
					<PickButton>&gt;&gt;</PickButton>
					<RefField $width={316}>
						<PickIcon>
							<GroupIcon />
						</PickIcon>
						<ColorBar $color="#666" />
						<span>VIEWPOINT</span>
					</RefField>
				</PickRow>
				<FieldLabel $top={12}>Default Switch/State</FieldLabel>
				<PickRow $top={5}>
					<PickButton>&gt;&gt;</PickButton>
					<RefField $width={316}>
						<PickIcon>
							<StateIcon />
						</PickIcon>
						<ColorBar $color="#666" />
						<span>INSIDE</span>
					</RefField>
				</PickRow>
			</Group>
		</Column>
	</SettingsGrid>
);

const assignRows = ['combustion_inside', 'combustion_outside'];

const Contents = (): ReactElement => (
	<ContentsFrame>
		<AssignTable>
			<AssignHead>
				<span>Name</span>
				<span>Play 1st only</span>
				<span>Continue to play across Switches</span>
			</AssignHead>
			<SearchCorner>
				<FaSearch size={11} />
			</SearchCorner>
			<AssignBody>
				{assignRows.map((name) => (
					<AssignRow key={name}>
						<AssignName>
							<Chevron open={false} />
							<AssignHandle />
							<AssignCheck $big />
							<AssignIcon>
								<RandomIcon />
							</AssignIcon>
							<ColorBar $color={BROWN} />
							<AssignText>{name}</AssignText>
						</AssignName>
						<CellCheck>
							<EmptyCheck />
						</CellCheck>
						<CellCheck>
							<EmptyCheck />
						</CellCheck>
					</AssignRow>
				))}
			</AssignBody>
			<VScroll>
				<ScrollArrow $dir="up" />
				<ScrollArrow $dir="down" />
			</VScroll>
			<HScroll>
				<ScrollArrow $dir="left" />
				<HThumb />
				<ScrollArrow $dir="right" />
			</HScroll>
		</AssignTable>
		<PaneSplit />
		<ObjectsTable>
			<ObjectsHead>Assigned Objects</ObjectsHead>
			<ObjectsList>
				<ObjectState $height={28}>
					INSIDE (Default)
					<Chevron open />
				</ObjectState>
				<ObjectItem>
					<RandomIcon />
					<ColorBar $color={BROWN} $height={23} />
					<ObjectField>combustion_inside</ObjectField>
				</ObjectItem>
				<ObjectState $height={28} $italic>
					None
					<Chevron open dim />
				</ObjectState>
				<ObjectState $height={27}>
					OUTSIDE
					<Chevron open />
				</ObjectState>
				<ObjectItem>
					<RandomIcon />
					<ColorBar $color={BROWN} $height={23} />
					<ObjectField>combustion_outside</ObjectField>
				</ObjectItem>
			</ObjectsList>
			<ObjectsScroll>
				<ScrollArrow $dir="up" />
				<ScrollThumb $top={20} $height={111} />
				<ScrollArrow $dir="down" />
			</ObjectsScroll>
		</ObjectsTable>
	</ContentsFrame>
);

const Editor = (): ReactElement => (
	<EditorPanel>
		<EditorHeader>
			<NavArrows>
				<ArrowLeft size={20} />
				<ArrowRight size={20} />
			</NavArrows>
			<DocTab>
				<Recycle size={18} color="#8a8a8a" />
				<SwitchIcon />
				<ColorBar $color={BROWN} />
				<DocTitle>combustion</DocTitle>
				<TabClose>×</TabClose>
			</DocTab>
			<HeaderTools>
				<StarButton>*</StarButton>
				<FaFolderOpen size={17} />
				<FaSave size={17} />
				<FaQuestionCircle size={17} />
				<X size={19} />
			</HeaderTools>
		</EditorHeader>
		<EditorBody>
			<SettingsFrame>
				<NameRow>
					<TextField $width={386}>combustion</TextField>
					<ThinRule />
					<ColorSwatch>
						<FaPalette size={17} />
					</ColorSwatch>
					<LetterButton>M</LetterButton>
					<LetterButton>S</LetterButton>
					<InclusionBlock>
						<DragHandle />
						<CheckMark $big />
						Inclusion
					</InclusionBlock>
					<ShareButton>
						<Svg width="18" height="18" viewBox="0 0 18 18" fill="#ddd" stroke="#ddd">
							<circle cx="4" cy="9" r="3" />
							<circle cx="14" cy="3" r="2" />
							<circle cx="14" cy="15" r="2" />
							<path d="M4 9 14 3M4 9 14 15" />
						</Svg>
						1
					</ShareButton>
					<NotesField $width={336} $muted>
						Notes
					</NotesField>
				</NameRow>
				<HRule />
				<SettingsTabRow>
					<SettingsTabs $left={1}>
						{settingsTabs.map(([label, width], i) => (
							<Tab key={label} $width={width} $active={i === 0}>
								{label}
							</Tab>
						))}
					</SettingsTabs>
					<ViewButtons>
						<ViewButton $kind="one" $on>
							<i />
						</ViewButton>
						<ViewButton $kind="cols">
							<i />
							<i />
						</ViewButton>
						<ViewButton $kind="rows">
							<i />
							<i />
						</ViewButton>
					</ViewButtons>
				</SettingsTabRow>
				<Settings />
			</SettingsFrame>
			<SplitterGap />
			<Contents />
			<EditorFooter>
				<ContentsTab>CONTENTS</ContentsTab>
				<FooterTools>
					<Svg width="17" height="17" viewBox="0 0 17 17" fill="none" stroke="#ccc" strokeWidth="1.5">
						<path d="M8.5 1V11M4 7 8.5 12 13 7M0 15.5H17" />
					</Svg>
					<Svg width="17" height="17" viewBox="0 0 17 17" fill="none" stroke="#ccc" strokeWidth="1.5">
						<path d="M8.5 16V6M4 10 8.5 5 13 10M0 1.5H17" />
					</Svg>
					<Svg width="17" height="17" viewBox="0 0 17 17" fill="none" stroke="#ccc" strokeWidth="1.5">
						<path d="M8 3H1V16H15V10M8 9 15 2M10 1H16V7" />
					</Svg>
				</FooterTools>
			</EditorFooter>
		</EditorBody>
	</EditorPanel>
);

export default function App(): ReactElement {
	return (
		<Page>
			<GlobalStyle />
			<Window>
				<Explorer />
				<Editor />
			</Window>
			<TreeCallout />
			<SwitchCallout />
			<ContentsCallout />
			<Arrows width="1932" height="904" viewBox="0 0 1932 904">
				<g fill="#ffcc00" stroke="#111" strokeWidth="3" strokeLinejoin="miter">
					<polygon points="493,483 526,433 535,453 597,417 600,427 541,462 552,477" />
					<polygon points="1470,228 1407,222 1416,207 1359,172 1364,162 1424,196 1432,178" />
					<polygon points="887,656 827,650 838,632 777,597 782,588 846,625 852,608" />
				</g>
			</Arrows>
		</Page>
	);
}
